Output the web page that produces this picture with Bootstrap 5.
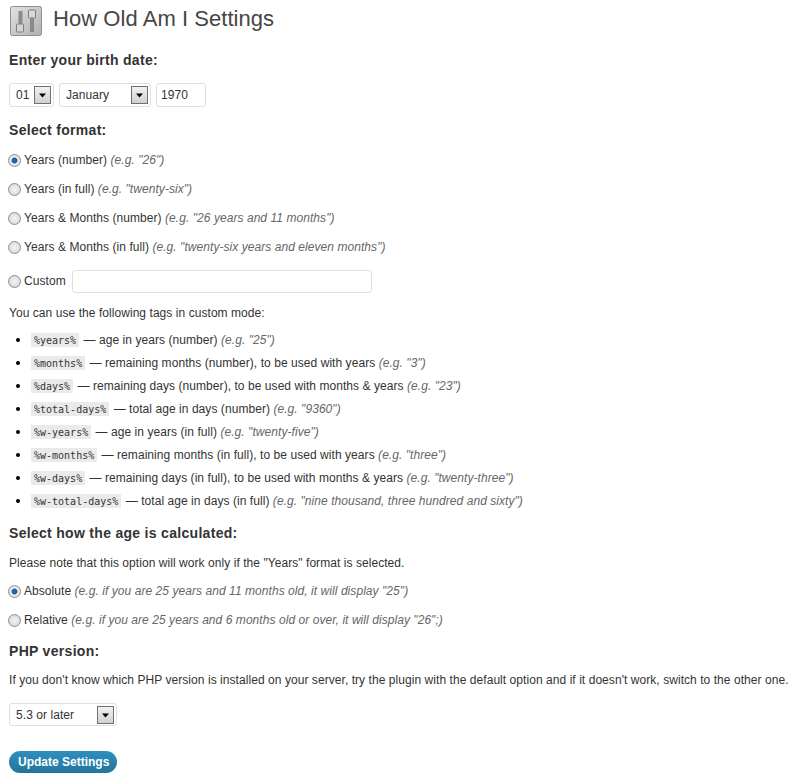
<!DOCTYPE html>
<html lang="en">
<head>
<meta charset="utf-8">
<title>How Old Am I Settings</title>
<link href="https://cdn.jsdelivr.net/npm/bootstrap@5.3.0/dist/css/bootstrap.min.css" rel="stylesheet">
<style>
body{font:12px/1.4 "Liberation Sans",Arial,sans-serif;color:#333;background:#fff;letter-spacing:.058px}
.wrapx{padding:0 8px 0 9px}
.titlebar{height:40px;padding-top:1px}
.titlebar svg{margin-left:1px;flex:none}
.titlebar h2{font:22px/1 "Liberation Sans",Arial,sans-serif;color:#464646;margin:0 0 3px 11px;letter-spacing:.05px}
.sect{font:bold 14px/18px "Liberation Sans",Arial,sans-serif;color:#333;margin:0;letter-spacing:.3px}
.sect1{margin-top:11px}
.sect2{margin-bottom:7px}
.sect3{margin-top:12px;margin-bottom:13px}
.sect4{margin-top:7px;margin-bottom:12px}
.pickx{appearance:none;height:24px;border:1px solid #dfdfdf;border-radius:3px;background-color:#fff;font:12px "Liberation Sans",Arial,sans-serif;letter-spacing:.06px;color:#333;padding:0 0 0 6px;background-repeat:no-repeat;background-position:right 1px center;background-size:18px 18px;background-image:url("data:image/svg+xml,%3Csvg xmlns='http://www.w3.org/2000/svg' width='18' height='18'%3E%3Cdefs%3E%3ClinearGradient id='g' x1='0' y1='0' x2='0' y2='1'%3E%3Cstop offset='0' stop-color='%23f2f2f2'/%3E%3Cstop offset='1' stop-color='%23cfcfcf'/%3E%3C/linearGradient%3E%3C/defs%3E%3Crect x='.5' y='.5' width='16' height='17' fill='url(%23g)' stroke='%23707070'/%3E%3Cpath d='M5 7.500h7l-3.500 4z' fill='%23000'/%3E%3C/svg%3E")}
.day{width:45px}.month{width:92px}.ver{width:108px;height:23px}
.yearx{width:50px;height:24px;border:1px solid #dfdfdf;border-radius:3px;font:12px "Liberation Sans",Arial,sans-serif;letter-spacing:.06px;color:#333;padding:0 4px}
.datebar{margin:14px 0 14px 0;gap:5px}
.optx{height:29px;margin:0}
.optx input{appearance:none;width:13px;height:13px;margin:0 3px 0 -1px;border-radius:50%;border:1px solid #8d8d8d;background:radial-gradient(circle at 50% 50%,#f4f4f4 0,#d2d2d2 100%);flex:none}
.optx input:checked{background:radial-gradient(circle at 50% 50%,#2c6fb0 0,#1c5f9f 30%,#e8eef4 45%,#d5d5d5 100%)}
.optx em{color:#666}
.lastopt{margin-top:5px}
.tagtext{margin:0}
.tagintro{margin:9px 0 6px}
.notex{margin-bottom:5px}
.phpnote{margin-bottom:15px}
.customx{width:300px;height:23px;margin-left:6px;border:1px solid #dfdfdf;border-radius:3px}
.taglist{list-style:disc;margin:0;padding:0 0 0 22px}
.taglist li{height:23px;line-height:23px}
.taglist li::marker{color:#000;font-size:13px}
.taglist em{color:#666}
.codex{font:10px/13px "DejaVu Sans Mono",monospace;letter-spacing:0;background:#eaeaea;color:#333;padding:1.5px 3px;margin-right:1px}
.updx{height:22px;border:0;border-radius:11px;background:linear-gradient(#2f8fbd,#21759b);color:#fff;font:bold 12px/22px "Liberation Sans",Arial,sans-serif;padding:0 9px;width:108px;white-space:nowrap}
.updx:hover{background:#21759b;color:#fff}
.subrow{margin-top:25px}
</style>
</head>
<body>
<form class="wrapx">
  <div class="titlebar d-flex align-items-center">
    <svg width="32" height="30" viewBox="0 0 32 30" aria-hidden="true">
      <defs><linearGradient id="ig" x1="0" y1="0" x2="1" y2="1"><stop offset="0" stop-color="#e2e2e2"/><stop offset="1" stop-color="#b0b0b0"/></linearGradient></defs>
      <rect x=".5" y=".5" width="31" height="29" rx="2" fill="url(#ig)" stroke="#8e8e8e"/>
      <rect x="8.500" y="5" width="4" height="16" fill="#8a8a8a"/>
      <rect x="6.500" y="18" width="7" height="8" rx="1" fill="#d4d4d4" stroke="#7d7d7d"/>
      <rect x="20" y="5" width="4" height="21" fill="#8a8a8a"/>
      <rect x="18.500" y="4" width="7" height="8" rx="1" fill="#d8d8d8" stroke="#7d7d7d"/>
    </svg>
    <h2>How Old Am I Settings</h2>
  </div>
  <h3 class="sect sect1">Enter your birth date:</h3>
  <div class="datebar d-flex">
    <select class="pickx day" aria-label="Day"><option>01</option></select>
    <select class="pickx month" aria-label="Month"><option>January</option></select>
    <input class="yearx" type="text" value="1970" aria-label="Year">
  </div>
  <h3 class="sect sect2">Select format:</h3>
  <label class="optx d-flex align-items-center"><input type="radio" name="f" checked><span>Years (number) <em>(e.g. "26")</em></span></label>
  <label class="optx d-flex align-items-center"><input type="radio" name="f"><span>Years (in full) <em>(e.g. "twenty-six")</em></span></label>
  <label class="optx d-flex align-items-center"><input type="radio" name="f"><span>Years &amp; Months (number) <em>(e.g. "26 years and 11 months")</em></span></label>
  <label class="optx d-flex align-items-center"><input type="radio" name="f"><span>Years &amp; Months (in full) <em>(e.g. "twenty-six years and eleven months")</em></span></label>
  <label class="optx lastopt d-flex align-items-center"><input type="radio" name="f"><span>Custom</span><span class="customx bg-white d-block"></span></label>
  <p class="tagintro">You can use the following tags in custom mode:</p>
  <ul class="taglist">
    <li><code class="codex">%years%</code> — age in years (number) <em>(e.g. "25")</em></li>
    <li><code class="codex">%months%</code> — remaining months (number), to be used with years <em>(e.g. "3")</em></li>
    <li><code class="codex">%days%</code> — remaining days (number), to be used with months &amp; years <em>(e.g. "23")</em></li>
    <li><code class="codex">%total-days%</code> — total age in days (number) <em>(e.g. "9360")</em></li>
    <li><code class="codex">%w-years%</code> — age in years (in full) <em>(e.g. "twenty-five")</em></li>
    <li><code class="codex">%w-months%</code> — remaining months (in full), to be used with years <em>(e.g. "three")</em></li>
    <li><code class="codex">%w-days%</code> — remaining days (in full), to be used with months &amp; years <em>(e.g. "twenty-three")</em></li>
    <li><code class="codex">%w-total-days%</code> — total age in days (in full) <em>(e.g. "nine thousand, three hundred and sixty")</em></li>
  </ul>
  <h3 class="sect sect3">Select how the age is calculated:</h3>
  <p class="tagtext notex">Please note that this option will work only if the "Years" format is selected.</p>
  <label class="optx d-flex align-items-center"><input type="radio" name="a" checked><span>Absolute <em>(e.g. if you are 25 years and 11 months old, it will display "25")</em></span></label>
  <label class="optx d-flex align-items-center"><input type="radio" name="a"><span>Relative <em>(e.g. if you are 25 years and 6 months old or over, it will display "26";)</em></span></label>
  <h3 class="sect sect4">PHP version:</h3>
  <p class="tagtext phpnote">If you don't know which PHP version is installed on your server, try the plugin with the default option and if it doesn't work, switch to the other one.</p>
  <div><select class="pickx ver" aria-label="PHP version"><option>5.3 or later</option></select></div>
  <div class="subrow"><button type="button" class="btn updx">Update Settings</button></div>
</form>
</body>
</html>
